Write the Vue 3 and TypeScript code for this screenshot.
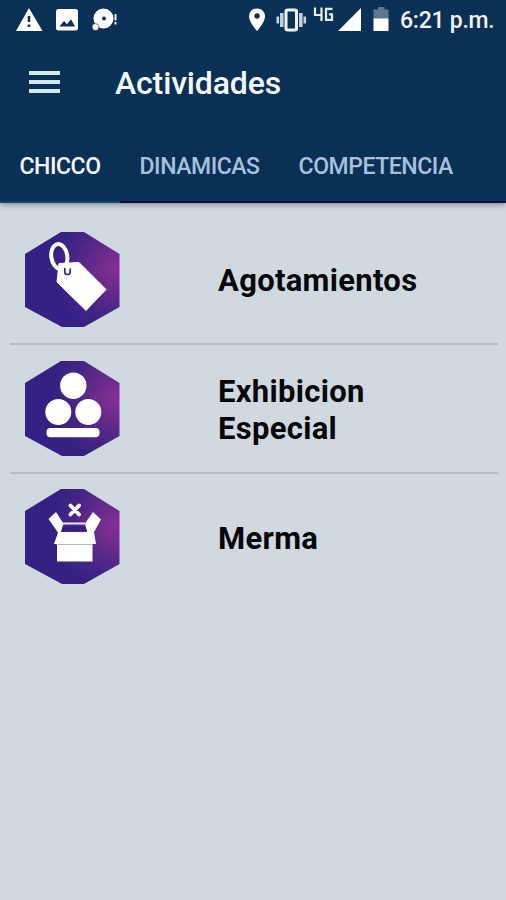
<script setup lang="ts">
import { ref } from 'vue'

type IconName = 'tag' | 'display' | 'box'

interface Activity {
  label: string
  icon: IconName
}

const tabs: string[] = ['CHICCO', 'DINAMICAS', 'COMPETENCIA']
const activeTab = ref(0)

const activities: Activity[] = [
  { label: 'Agotamientos', icon: 'tag' },
  { label: 'Exhibicion Especial', icon: 'display' },
  { label: 'Merma', icon: 'box' },
]
</script>

<template>
  <div class="screen">
    <header class="header">
      <div class="status">
        <svg class="status-left" width="130" height="40" viewBox="0 0 130 40">
          <path d="M29 8 42.500 31H16Z" fill="#fff" />
          <path d="M29 16v6M29 24.500v2.500" stroke="#0b3055" stroke-width="2.600" />
          <rect x="56" y="9" width="22" height="21.500" rx="2.500" fill="#fff" />
          <path d="M59.500 26.500 64 21l3 3.200 4-5 4 7.300Z" fill="#0b3055" />
          <circle cx="103.500" cy="18.500" r="10" fill="#fff" />
          <circle cx="95.500" cy="27" r="3.400" fill="#fff" stroke="#0b3055" stroke-width=".6" />
          <circle cx="104" cy="18.500" r="2" fill="#0b3055" />
          <path d="M115.500 14v6.500M115.500 22v2.500" stroke="#e8f0f5" stroke-width="2" />
        </svg>
        <svg class="status-right" width="150" height="40" viewBox="240 0 150 40">
          <path d="M257 8.500c-4.700 0-8 3.500-8 7.900 0 5.600 8 14.600 8 14.600s8-9 8-14.600c0-4.400-3.300-7.900-8-7.900Z" fill="#fff" />
          <circle cx="257" cy="16" r="2.700" fill="#0b3055" />
          <rect x="286" y="10" width="10.500" height="20" rx="1.500" fill="none" stroke="#eef3f6" stroke-width="3" />
          <path d="M281.800 13v14M300.800 13v14" stroke="#c5d3dc" stroke-width="3.500" />
          <path d="M277.800 16.500v7M304.800 16.500v7" stroke="#c5d3dc" stroke-width="2.600" />
          <path d="M315 7.500v7.500h7M321.500 7.500v13.500M332.500 8.800H326v11h6v-5.500h-3" fill="none" stroke="#e8eff4" stroke-width="2.200" />
          <path d="M361 8v23h-23Z" fill="#fff" />
          <path d="M378 7h6.500v2.500h4V19h-15V9.500h4.500Z" fill="#5c7891" />
          <path d="M373.500 18.500h15V31h-15Z" fill="#fff" />
        </svg>
        <span class="clock">6:21 p.m.</span>
      </div>
      <div class="toolbar">
        <button class="menu" aria-label="Menu">
          <span></span><span></span><span></span>
        </button>
        <h1>Actividades</h1>
      </div>
      <nav class="tabs">
        <button
          v-for="(tab, i) in tabs"
          :key="tab"
          class="tab"
          :class="{ active: i === activeTab }"
          @click="activeTab = i"
        >
          {{ tab }}
        </button>
      </nav>
    </header>

    <main class="list">
      <div v-for="item in activities" :key="item.label" class="row">
        <svg class="badge" width="95" height="95" viewBox="0 0 95 95">
          <defs>
            <radialGradient :id="'glow-' + item.icon" gradientUnits="userSpaceOnUse" cx="91" cy="37" r="64">
              <stop offset="0" stop-color="#833091" />
              <stop offset=".3" stop-color="#6c2b8c" />
              <stop offset=".7" stop-color="#462585" />
              <stop offset="1" stop-color="#352183" />
            </radialGradient>
          </defs>
          <path d="M36 0h23l35.500 22v53L59 95H37L0 75V22Z" :fill="`url(#glow-${item.icon})`" />
          <g v-if="item.icon === 'tag'">
            <ellipse cx="34.300" cy="24.500" rx="8" ry="12.500" transform="rotate(-8 34.300 24.500)" fill="none" stroke="#fff" stroke-width="4" />
            <path d="M34 31.500 54 30.500 81 57.500 61 78.500 32 50Z" fill="#fff" stroke="#fff" stroke-width="1" stroke-linejoin="round" />
            <path d="M39.800 36v4a2.700 2.500 0 0 0 5.400 0v-3.500" fill="none" stroke="#3a2670" stroke-width="1.700" />
            <path d="M42.500 31v7" stroke="#fff" stroke-width="2.500" />
          </g>
          <g v-else-if="item.icon === 'display'" fill="#fff">
            <circle cx="48.300" cy="24.700" r="13.200" />
            <circle cx="33.300" cy="51" r="13" />
            <circle cx="63.300" cy="51" r="13" />
            <rect x="21.500" y="67" width="53" height="9.200" rx="4" />
          </g>
          <g v-else>
            <path d="m45.500 16.500 8.500 9m0-9-8.500 9" stroke="#fff" stroke-width="3.800" stroke-linecap="round" />
            <path d="M23.500 30 31 23 38.500 34.500 36 43H62L60 34.500 68 23 76 30.500 69 43 71 55H29L33 43.500Z" fill="#fff" />
            <path d="M38 34.500h22" stroke="#ece9f4" stroke-width="2" />
            <path d="M38 37h22l2 5H36.500Z" fill="#382080" />
            <path d="M32 56h35.500v16.500H32Z" fill="#fff" />
            <path d="M31.500 55.500h36" stroke="#bcb9c9" stroke-width="1" />
          </g>
        </svg>
        <span class="label">{{ item.label }}</span>
      </div>
    </main>
  </div>
</template>

<style>
body {
  margin: 0;
}
</style>

<style scoped>
.screen {
  display: flex;
  flex-direction: column;
  width: 506px;
  height: 900px;
  overflow: hidden;
  background: #d0d8e0;
  font-family: Roboto, "Liberation Sans", sans-serif;
}

button {
  border: 0;
  background: none;
  font: inherit;
}

.header {
  flex: none;
  height: 203px;
  background: #0b3055;
  box-shadow: 0 2px 5px rgba(70, 75, 80, 0.5);
}

.status {
  display: flex;
  align-items: center;
  height: 40px;
}

.status-right {
  margin-left: 110px;
}

.clock {
  margin-left: 10px;
  color: #eef4f7;
  font-size: 23px;
  font-weight: 500;
  letter-spacing: -0.25px;
  white-space: nowrap;
}

.toolbar {
  display: flex;
  align-items: center;
  height: 86px;
}

.menu {
  display: flex;
  flex-direction: column;
  gap: 5px;
  width: 31px;
  margin: 0 0 2px 29px;
  padding: 0;
}

.menu span {
  height: 4px;
  background: #d5e8ee;
}

h1 {
  margin: 0 0 0 55px;
  color: #f2fafc;
  font-size: 32px;
  font-weight: 500;
  letter-spacing: -0.15px;
  line-height: 40px;
}

.tabs {
  display: flex;
  height: 77px;
  box-sizing: border-box;
}

.tab {
  flex: none;
  box-sizing: border-box;
  padding: 6px 19.500px 0;
  border-bottom: 2px solid #06094a;
  color: #a9c0dc;
  font-size: 23px;
  font-weight: 500;
  letter-spacing: -0.45px;
  white-space: nowrap;
}

.tab.active {
  border-bottom-color: #0d4580;
  color: #f2fafc;
}

.tab:last-child {
  flex: 1;
  text-align: left;
}

.list {
  padding: 12px 8px 0 10px;
}

.row {
  display: flex;
  align-items: center;
  box-sizing: border-box;
  height: 128.400px;
  padding-left: 15px;
}

.row + .row {
  border-top: 2px solid #b3bdc8;
}

.badge {
  flex: none;
}

.label {
  width: 210px;
  margin: 3px 0 0 98px;
  color: #050708;
  font-size: 31px;
  font-weight: 700;
  letter-spacing: 0.3px;
  line-height: 37px;
}
</style>
